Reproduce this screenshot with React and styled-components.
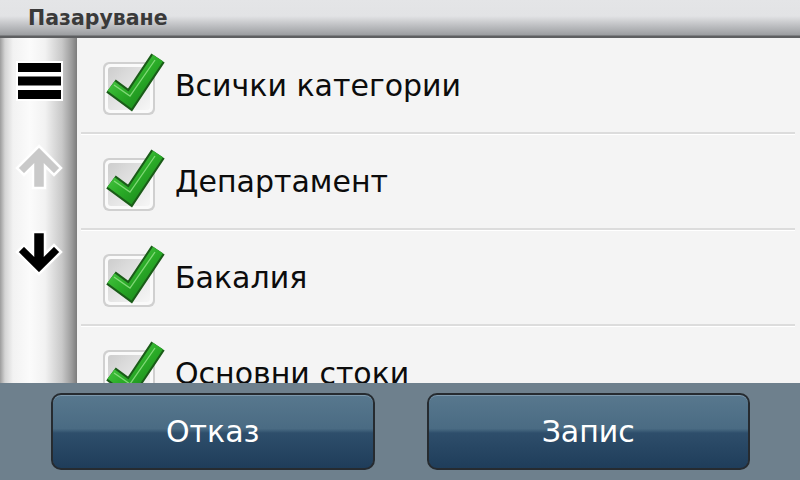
import styled, { createGlobalStyle } from "styled-components"

const items = ["Всички категории", "Департамент", "Бакалия", "Основни стоки"]

const GlobalStyle = createGlobalStyle`
    html, body {
        margin: 0;
        padding: 0;
        width: 800px;
        height: 480px;
        overflow: hidden;
        background: #f4f4f4;
    }
    * {
        box-sizing: border-box;
    }
`

function MenuIcon() {
    return (
        <svg width="47" height="40" viewBox="0 0 47 40">
            <rect x="0" y="0" width="47" height="40" fill="#fff" />
            <rect x="2" y="2" width="43" height="9" fill="#000" />
            <rect x="2" y="15.5" width="43" height="9" fill="#000" />
            <rect x="2" y="29" width="43" height="9" fill="#000" />
        </svg>
    )
}

function ArrowIcon({ down, color }) {
    return (
        <svg width="48" height="46" viewBox="0 0 48 46">
            <g transform={down ? "rotate(180 24 23)" : undefined}>
                <polygon
                    points="24,2 46,24 39,31 30,22 30,44 18,44 18,22 9,31 2,24"
                    fill={color}
                    stroke="#fff"
                    strokeWidth="2.5"
                    strokeLinejoin="miter"
                />
            </g>
        </svg>
    )
}

// checkbox with the green tick spilling over its top-right corner
function CheckIcon() {
    return (
        <svg width="68" height="70" viewBox="0 0 68 70">
            <defs>
                <linearGradient id="boxFill" x1="0" y1="0" x2="1" y2="1">
                    <stop offset="0" stopColor="#cdcdcd" />
                    <stop offset="0.5" stopColor="#e4e4e4" />
                    <stop offset="1" stopColor="#f6f6f6" />
                </linearGradient>
                <linearGradient id="checkFill" x1="0" y1="0" x2="1" y2="1">
                    <stop offset="0" stopColor="#5ad653" />
                    <stop offset="0.55" stopColor="#2aab27" />
                    <stop offset="1" stopColor="#17831a" />
                </linearGradient>
            </defs>
            <rect x="4" y="13" width="52" height="53" rx="6" fill="#d0d0d0" />
            <rect x="6" y="15" width="48" height="49" rx="5" fill="#fafafa" />
            <rect x="9" y="18" width="42" height="43" rx="3" fill="url(#boxFill)" />
            <polyline
                points="12,37 31,51 59,9"
                fill="none"
                stroke="#1a5c18"
                strokeWidth="16"
                strokeLinejoin="miter"
            />
            <polyline
                points="12,37 31,51 59,9"
                fill="none"
                stroke="url(#checkFill)"
                strokeWidth="12"
                strokeLinejoin="miter"
            />
            <polyline
                points="15,36 31,47 56,11"
                fill="none"
                stroke="#a5ec98"
                strokeWidth="1.3"
                strokeLinejoin="miter"
                opacity="0.7"
            />
        </svg>
    )
}

export default function App() {
    return (
        <Screen>
            <GlobalStyle />
            <Header>Пазаруване</Header>

            <Main>
                <Sidebar>
                    <IconSlot><MenuIcon /></IconSlot>
                    <IconSlot><ArrowIcon color="#c9c9c9" /></IconSlot>
                    <IconSlot><ArrowIcon down color="#000" /></IconSlot>
                </Sidebar>

                <List>
                    {items.map((name) =>
                        <Row key={name}>
                            <CheckSlot><CheckIcon /></CheckSlot>
                            <Label>{name}</Label>
                        </Row>
                    )}
                </List>
            </Main>

            <Footer>
                <Button>Отказ</Button>
                <Button>Запис</Button>
            </Footer>
        </Screen>
    )
}

const Screen = styled.div`
    width: 800px;
    height: 480px;
    display: flex;
    flex-direction: column;
    font-family: "DejaVu Sans", "Noto Sans", sans-serif;
    background: #f4f4f4;
`
const Header = styled.div`
    height: 38px;
    flex-shrink: 0;
    display: flex;
    align-items: center;
    padding: 0 0 2px 28px;
    font-size: 20.5px;
    font-weight: bold;
    color: #3a3a3a;
    background: linear-gradient(to bottom, #e4e5e7 0px, #e2e3e5 16px, #c4c5c8 24px, #9c9ea1 35px, #5e5f61 36px, #5e5f61 38px);
`
const Main = styled.div`
    flex: 1;
    display: flex;
    flex-direction: row;
    overflow: hidden;
`
const Sidebar = styled.div`
    width: 77px;
    flex-shrink: 0;
    display: flex;
    flex-direction: column;
    background: linear-gradient(to right, #9c9c9c 0px, #d4d4d4 5px, #f2f2f2 13px, #fbfbfb 30px, #f2f2f2 45px, #c8c8c8 62px, #9a9a9a 72px, #7c7c7c 77px);
`
const IconSlot = styled.div`
    height: 86px;
    display: flex;
    align-items: center;
    justify-content: center;
    padding-left: 1px;
`
const List = styled.div`
    flex: 1;
    display: flex;
    flex-direction: column;
    overflow: hidden;
`
const Row = styled.div`
    height: 96px;
    flex-shrink: 0;
    display: flex;
    align-items: center;
    padding-left: 18px;
    margin: 0 5px 0 4px;
    border-bottom: 2px solid #dcdcdc;
    box-shadow: 0 1px 0 #ffffff;
`
const CheckSlot = styled.div`
    width: 68px;
    height: 70px;
    margin-top: -2px;
    display: flex;
`
const Label = styled.div`
    margin-left: 8px;
    font-size: 30px;
    color: #0c0c0c;
`
const Footer = styled.div`
    height: 97px;
    flex-shrink: 0;
    display: flex;
    flex-direction: row;
    gap: 52px;
    padding: 10px 50px 10px 51px;
    background: #6e808d;
`
const Button = styled.div`
    flex: 1;
    display: flex;
    align-items: center;
    justify-content: center;
    border: 2px solid #262b30;
    border-radius: 10px;
    box-shadow: inset 0 1px 0 #7d99ad;
    font-size: 30px;
    color: #fff;
    background: linear-gradient(to bottom, #58788e 0%, #4a6b83 46%, #3d5e78 49%, #2e4e6b 52%, #1f3d5a 100%);
`
